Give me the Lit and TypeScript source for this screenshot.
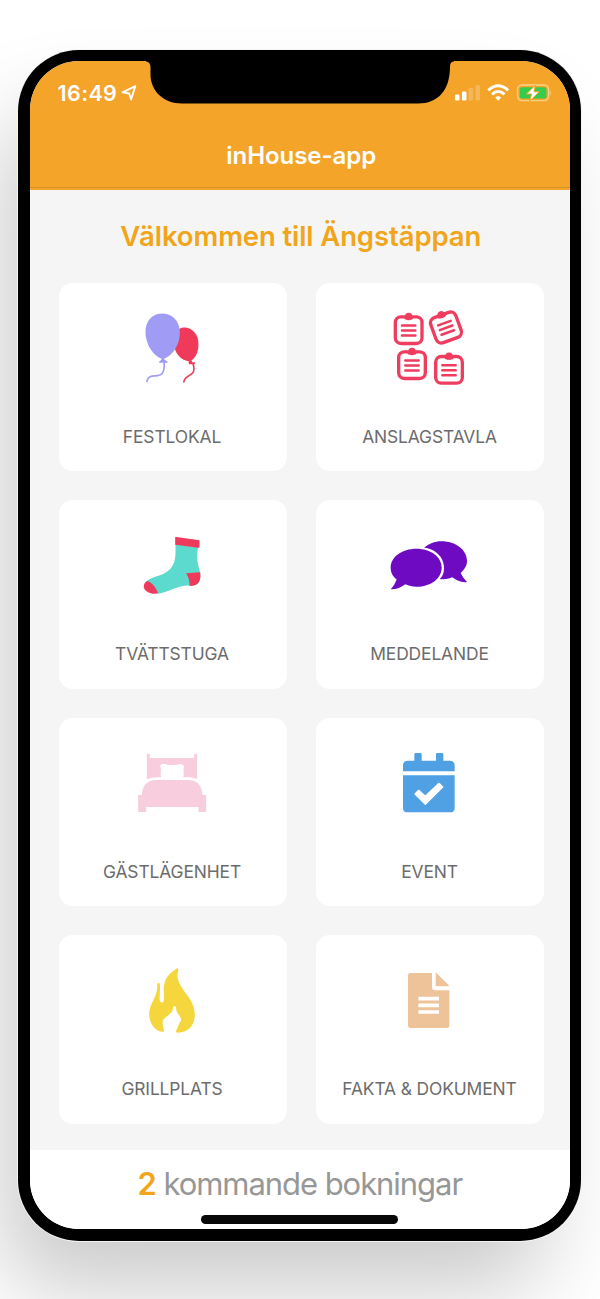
import { LitElement, html, css, svg } from "lit";
import { customElement } from "lit/decorators.js";

const note = svg`
  <rect x="-40" y="-40" width="80" height="80" rx="17" fill="none" stroke="#ee3d5e" stroke-width="10"/>
  <circle cx="0" cy="-41" r="11" fill="#ee3d5e"/><path d="M-16-40h32l-5 8h-22z" fill="#ee3d5e"/>
  <path d="M-20-14h40M-20 1h40M-20 16h40" stroke="#ee3d5e" stroke-width="7.5" stroke-linecap="round"/>`;

const tiles = [
  { label: "FESTLOKAL", box: "-184.5 -22.5 684 360", art: svg`
    <g fill="#f03a5a"><path d="M191 111C217 111 234 134 234 160C234 188 224 204 208 213C181 211 161 188 161 160C161 132 169 111 191 111Z"/>
    <path d="M206 210h7l3 5l8 1l-1 5h-17l-2-4z"/></g>
    <path d="M218 221C221 231 222 240 217 247C208 258 193 256 190 274" fill="none" stroke="#e8435f" stroke-width="5" stroke-linecap="round"/>
    <path d="M126 69C157 69 178 94 178 126C178 166 154 198 127 206C99 198 75 163 75 123C75 92 95 69 126 69Z" fill="#a09cf5"/>
    <path d="M123 203h8l1 5l9 5v4h-25v-4l7-5z" fill="#a09cf5"/>
    <path d="M131 217C132 231 132 240 125 249C113 264 84 245 79 273" fill="none" stroke="#a09cf5" stroke-width="5" stroke-linecap="round"/>` },
  { label: "ANSLAGSTAVLA", box: "-177 -20.5 684 360", art: svg`
    <g transform="translate(101 121)">${note}</g>
    <g transform="translate(213 113) rotate(-20)">${note}</g>
    <g transform="translate(111 226)">${note}</g>
    <g transform="translate(222 240)">${note}</g>` },
  { label: "TVÄTTSTUGA", box: "-184.5 -46 684 360", art: svg`
    <path d="M165 87L233 96C226 124 232 145 239 172C242 198 233 213 209 211C174 208 147 231 112 235L76 199C97 181 126 183 146 164C168 145 165 116 165 87Z" fill="#5bdacd"/>
    <path d="M164 66q0-2 4-1L237 75v21q-1 2-4 1L164 88z" fill="#ee3b5b"/>
    <path d="M197 174L239 171C243 199 231 214 207 211C208 196 203 184 197 174Z" fill="#ee3b5b"/>
    <path d="M80 197C97 203 106 217 113 234C96 239 73 231 70 216C69 206 74 200 80 197Z" fill="#ee3b5b"/>` },
  { label: "MEDDELANDE", box: "-177 -46 684 360", art: svg`
    <path d="M148 97C161 86 179 78 199 78C242 78 276 104 276 137C276 151 270 160 257 173C262 184 269 193 276 200C262 203 245 196 232 186C220 191 208 193 194 191C211 178 211 145 197 125C184 108 168 99 148 97Z" fill="#6e0ac2"/>
    <path d="M124 100C168 100 200 125 200 157C200 190 167 214 124 214C112 214 101 212 91 207C78 217 62 223 47 222C55 213 61 204 65 192C52 182 47 171 47 157C47 125 81 100 124 100Z" fill="#6e0ac2"/>` },
  { label: "GÄSTLÄGENHET", box: "-184.5 -51 684 360", art: svg`
    <path d="M79 57q5-2 9 0V69H221V57q5-2 9 0V132C215 128 209 127 188 127C192 116 187 106 190 97Q191 89 181 87C162 91 147 91 129 86Q118 87 120 97C124 107 118 115 122 127C101 126 91 129 79 133Z" fill="#f8cddd"/>
    <path d="M53 180H64C66 148 82 135 108 135H202C229 135 244 150 246 180H257V231H234V216H77V231H53Z" fill="#f8cddd"/>` },
  { label: "EVENT", box: "-177 -51 684 360", art: svg`
    <g fill="#4fa1e4"><path d="M84 109V92Q84 77 99 77H118V58q0-4 4-4h14q4 0 4 4V77H183V58q0-4 4-4h14q4 0 4 4V77H224Q239 77 239 92V109Z"/>
    <path d="M84 121H239V218Q239 232 225 232H98Q84 232 84 218Z"/></g>
    <path d="M120 177L131 166L151 184L192 145L203 156L151 208Z" fill="#fff" stroke="#fff" stroke-width="4" stroke-linejoin="round"/>` },
  { label: "GRILLPLATS", box: "-184.5 -45 684 360", art: svg`
    <path d="M171 54C176 58 171 66 171 76C171 118 223 142 223 193C223 222 207 248 171 248Q164 247 168 240C174 230 175 219 182 211C181 196 165 188 167 173Q164 164 158 171C158 190 142 194 127 210C127 219 125 226 131 241Q131 247 123 245C99 241 86 216 86 192C86 158 114 139 110 103Q115 95 118 103C120 117 116 135 118 153Q124 164 130 153C132 119 118 85 171 54Z" fill="#f5d63c"/>` },
  { label: "FAKTA & DOKUMENT", box: "-177 -45 684 360", art: svg`
    <path d="M107 69H171V112Q171 121 180 121H223V226Q223 234 215 234H107Q99 234 99 226V77Q99 69 107 69Z" fill="#eec39a"/>
    <path d="M182 67L224 109H182Z" fill="#eec39a"/>
    <path d="M130 146H192M130 166H192M130 186H192" stroke="#fff" stroke-width="11"/>` },
];

@customElement("app-root")
export class AppRoot extends LitElement {
  static styles = css`
    :host { display: block; font-family: Inter, "Liberation Sans", sans-serif; }
    .page { box-sizing: border-box; width: 600px; height: 1299px; padding: 49.5px 0 0 18px; overflow: hidden; background: #fff; }
    .phone { position: relative; box-sizing: border-box; width: 563px; height: 1191.5px; padding: 11.5px 11px 12px 11.5px; border-radius: 61px; background: #000; box-shadow: 0 0 0 1px #f3f3f3, -26px 58px 90px -10px rgba(0,0,0,.21); }
    .screen { display: flex; flex-direction: column; height: 100%; overflow: hidden; border-radius: 49px; background: #f5f5f5; }
    .top { flex: none; box-sizing: border-box; height: 128.5px; display: flex; flex-direction: column; background: #f3a429; border-bottom: 2px solid #f3a429; box-shadow: inset 0 -1px #d9922c; }
    .status { display: flex; height: 64px; box-sizing: border-box; padding: 17px 18px 0 28px; align-items: flex-start; color: #fff; }
    .time { font-size: 21.5px; line-height: 30px; font-weight: 570; letter-spacing: .4px; width: 62px; white-space: nowrap; }
    .arrow { margin: 5px 0 0 1px; }
    .signals { margin-left: auto; margin-top: 4px; }
    .notch { position: absolute; left: 128px; top: 10px; }
    .title { color: #fff; text-align: center; font-size: 24px; font-weight: 600; line-height: 32px; margin: 15px 0 0 3px; letter-spacing: -.05px; }
    .body { flex: none; height: 960px; box-sizing: border-box; padding: 29.5px 27px 0 29px; }
    h1 { margin: 0 0 28.5px; height: 35px; text-align: center; color: #f0a51b; font-size: 27.5px; line-height: 35px; font-weight: 600; letter-spacing: -.1px; white-space: nowrap; }
    .grid { display: grid; grid-template-columns: 228px 228px; grid-auto-rows: 188.5px; gap: 29px 29.5px; }
    .tile { border-radius: 14px; background: #fff; text-align: center; }
    .art { display: block; width: 228px; height: 120px; }
    .label { margin: 21px 1px 0 0; line-height: 25px; font-size: 17.4px; color: #6c6c6c; white-space: nowrap; letter-spacing: -.11px; }
    .foot { flex: 1; background: #fff; text-align: center; }
    .book { margin-top: 14px; font-size: 31px; line-height: 40px; color: #979797; letter-spacing: -1.05px; white-space: nowrap; }
    .book b { color: #f0a51b; font-weight: 600; }
    .home { width: 197px; height: 9px; margin: 11.5px auto 0; border-radius: 5px; background: #080808; }
  `;

  render() {
    return html`<div class="page"><div class="phone">
      <div class="screen">
        <div class="top">
          <div class="status">
            <span class="time">16:49</span>
            <svg class="arrow" width="16" height="20" viewBox="0 0 16 20"><path d="M1.5 9.4L14.3 3.1L10.1 16.5L8.2 10.5Z" fill="none" stroke="#fff" stroke-width="1.9" stroke-linejoin="round"/></svg>
            <svg class="signals" width="98" height="22" viewBox="0 0 98 22">
              <g fill="#fff"><rect x="1" y="12.5" width="4.5" height="6" rx="1.3"/><rect x="8" y="9.5" width="4.5" height="9" rx="1.3"/><rect x="14.5" y="6" width="4.5" height="12.5" rx="1.3" opacity=".22"/><rect x="21.5" y="3" width="4.5" height="15.5" rx="1.3" opacity=".22"/></g>
              <g fill="none" stroke="#fff" stroke-width="3"><path d="M34.3 8.3Q44.2-.8 54.1 8.3"/><path d="M38 12.4Q44.2 6.6 50.4 12.4"/></g>
              <path d="M41.2 15.5Q44.2 13 47.2 15.5L44.2 18.8Z" fill="#fff"/>
              <rect x="63.6" y="3" width="31" height="15.6" rx="4.5" fill="none" stroke="#fbd18a" stroke-width="1.4"/>
              <rect x="65.8" y="5.2" width="26.6" height="11.2" rx="2" fill="#35cb4e"/>
              <path d="M96.2 8.4v5Q98.2 10.9 96.2 8.4" fill="#fbd18a"/>
              <path d="M81.5 3L72.5 12H77.5L75.8 19L85.3 9.8H80Z" fill="#fff" stroke="#f3a429" stroke-width="1"/>
            </svg>
          </div>
          <div class="title">inHouse-app</div>
        </div>
        <div class="body">
          <h1>Välkommen till Ängstäppan</h1>
          <div class="grid">
            ${tiles.map((t) => html`<div class="tile"><svg class="art" viewBox=${t.box}>${t.art}</svg><div class="label">${t.label}</div></div>`)}
          </div>
        </div>
        <div class="foot">
          <div class="book"><b>2</b> kommande bokningar</div>
          <div class="home"></div>
        </div>
      </div>
      <svg class="notch" width="308" height="46" viewBox="146 59.5 308 46"><path d="M146 59.5H454V61Q450 61 450 66C450 90 438 103 418 103H182C163 103 150.5 90 150.5 74V67Q150.5 61 145 61Z" fill="#000"/></svg>
    </div></div>`;
  }
}
